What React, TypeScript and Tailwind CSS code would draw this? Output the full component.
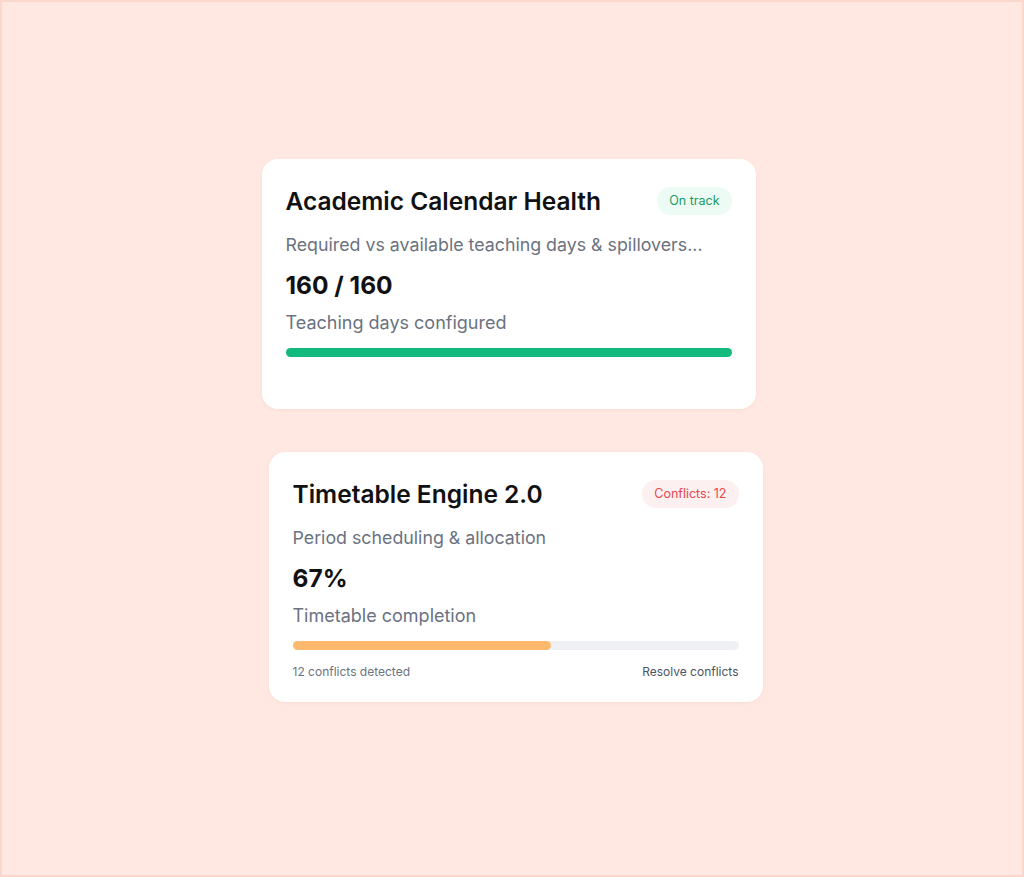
type Tone = 'green' | 'red';

interface CardProps {
    title: string;
    badge: string;
    tone: Tone;
    subtitle: string;
    value: string;
    caption: string;
    progress: number;
    barClass: string;
    footerLeft?: string;
    footerRight?: string;
    className?: string;
}

const badgeTone: Record<Tone, string> = {
    green: 'bg-[#ecfbf3] text-[#1a9b63]',
    red: 'bg-[#fdf0f0] text-[#e5484d]',
};

function HealthCard({
    title,
    badge,
    tone,
    subtitle,
    value,
    caption,
    progress,
    barClass,
    footerLeft,
    footerRight,
    className,
}: CardProps) {
    return (
        <div
            className={`w-[494px] rounded-2xl bg-white px-6 pt-6 pb-5 shadow-[0_1px_3px_rgba(220,150,130,0.12)] ${className ?? ''}`}
        >
            {/* Header */}
            <div className="flex items-center justify-between">
                <h2 className="text-[24.5px] leading-9 font-semibold text-[#111111]">{title}</h2>
                <span className={`flex h-7 items-center rounded-full px-3 text-[12.5px] ${badgeTone[tone]}`}>
                    {badge}
                </span>
            </div>

            <p className="mt-3 text-[17.8px] leading-7 text-[#6b7280]">{subtitle}</p>
            <p className="mt-3 text-[24.5px] leading-7 font-bold text-[#111111]">{value}</p>
            <p className="mt-2.5 text-[18px] leading-7 text-[#6b7280]">{caption}</p>

            {/* Progress */}
            <div className="mt-[11px] h-[9px] w-full rounded-full bg-[#eef0f3]">
                <div className={`h-full rounded-full ${barClass}`} style={{ width: `${progress}%` }} />
            </div>

            {/* Footer */}
            <div className="mt-3 flex h-5 items-center justify-between text-[12px]">
                <span className="text-[#6b7280]">{footerLeft}</span>
                <span className="text-[#4b5563]">{footerRight}</span>
            </div>
        </div>
    );
}

export default function App() {
    return (
        <div
            className="min-h-screen border-2 border-[#fbd6cb] bg-[#fee8e1] pt-[157px]"
            style={{ fontFamily: 'Inter, "Noto Sans", sans-serif' }}
        >
            <div className="mx-auto flex w-[501px] flex-col gap-[43px]">
                <HealthCard
                    className="self-start"
                    title="Academic Calendar Health"
                    badge="On track"
                    tone="green"
                    subtitle="Required vs available teaching days & spillovers..."
                    value="160 / 160"
                    caption="Teaching days configured"
                    progress={100}
                    barClass="bg-[#12bb7d]"
                />
                <HealthCard
                    className="self-end"
                    title="Timetable Engine 2.0"
                    badge="Conflicts: 12"
                    tone="red"
                    subtitle="Period scheduling & allocation"
                    value="67%"
                    caption="Timetable completion"
                    progress={58}
                    barClass="bg-[#fdb96e]"
                    footerLeft="12 conflicts detected"
                    footerRight="Resolve conflicts"
                />
            </div>
        </div>
    );
}
